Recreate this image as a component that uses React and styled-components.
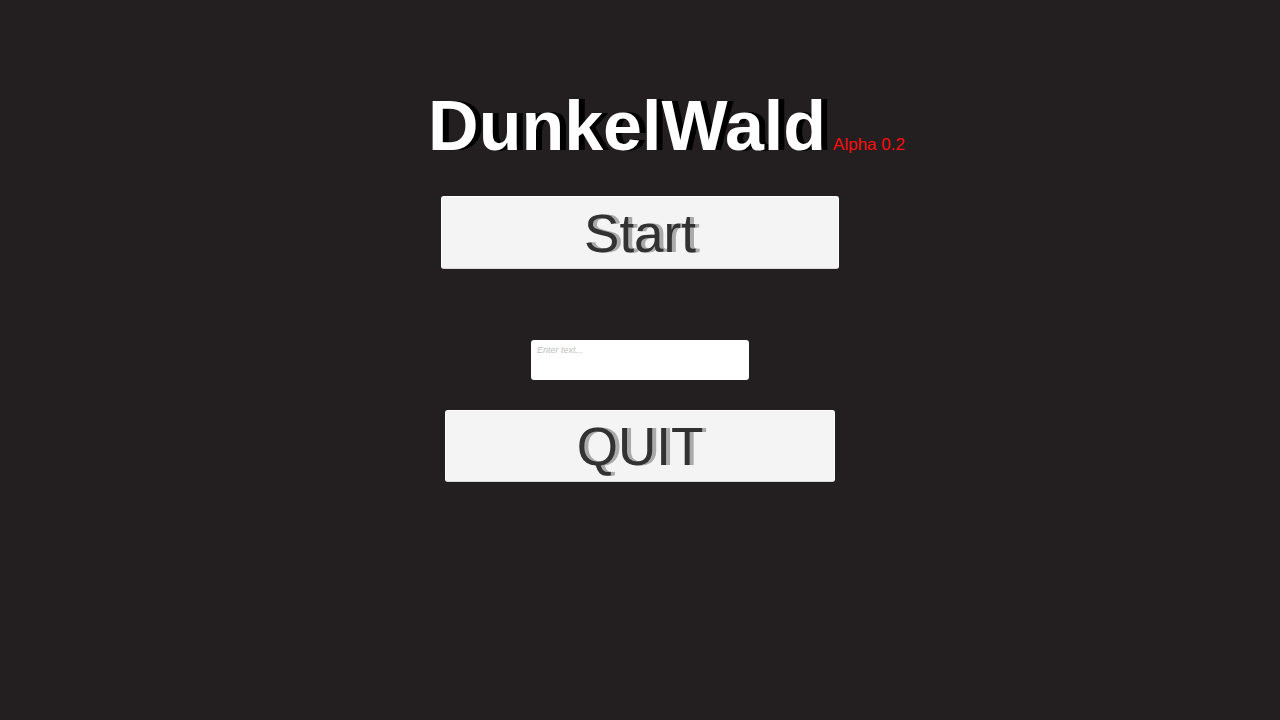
import React from "react";
import styled, { createGlobalStyle } from "styled-components";

const GlobalStyle = createGlobalStyle`
  * { box-sizing: border-box; }
  body {
    margin: 0;
    background: #231f20;
    font-family: "Liberation Sans", Arial, sans-serif;
  }
`;

const Menu = styled.main`
  min-height: 100vh;
  display: flex;
  flex-direction: column;
  align-items: center;
  padding: 86px 16px 24px;
`;

const Header = styled.header`
  display: flex;
  align-items: baseline;
  gap: 7px;
  padding-left: 53px;
  margin-bottom: 30px;
`;

const Title = styled.h1`
  margin: 0;
  font-size: 70px;
  line-height: 80px;
  font-weight: 700;
  color: #fff;
  text-shadow: 1px 0 #000, 2px 0 #000, 3px 0 #000, 4px 0 #000, 5px 0 #000, 6px 0 #000;
`;

const Version = styled.span`
  font-size: 17px;
  line-height: 20px;
  color: #fa0f0f;
`;

const MenuButton = styled.button`
  width: ${({ $width }) => $width}px;
  max-width: 100%;
  height: ${({ $height }) => $height}px;
  padding: 2px 0 0;
  border: 1px solid #fff;
  border-bottom-color: #d8d8d8;
  border-radius: 3px;
  background: #f4f4f4;
  color: #323232;
  font-family: inherit;
  font-size: 53px;
  line-height: 60px;
  text-shadow: 2px 0 #aaa, 4px 0 #aaa;
  cursor: pointer;
`;

const NameField = styled.textarea`
  display: block;
  width: 218px;
  max-width: 100%;
  height: 40px;
  margin: 71px 0 30px;
  padding: 5px 6px;
  border: 0;
  border-radius: 3px;
  background: #fff;
  color: #323232;
  font-family: inherit;
  font-size: 9px;
  line-height: 10px;
  resize: none;
  overflow: hidden;

  &::placeholder {
    color: #bebebe;
    font-style: italic;
    opacity: 1;
  }
`;

export default function App() {
  return (
    <>
      <GlobalStyle />
      <Menu>
        <Header>
          <Title>DunkelWald</Title>
          <Version>Alpha 0.2</Version>
        </Header>
        <MenuButton type="button" $width={398} $height={73}>Start</MenuButton>
        <NameField aria-label="Enter text" placeholder="Enter text..." />
        <MenuButton type="button" $width={390} $height={72}>QUIT</MenuButton>
      </Menu>
    </>
  );
}
